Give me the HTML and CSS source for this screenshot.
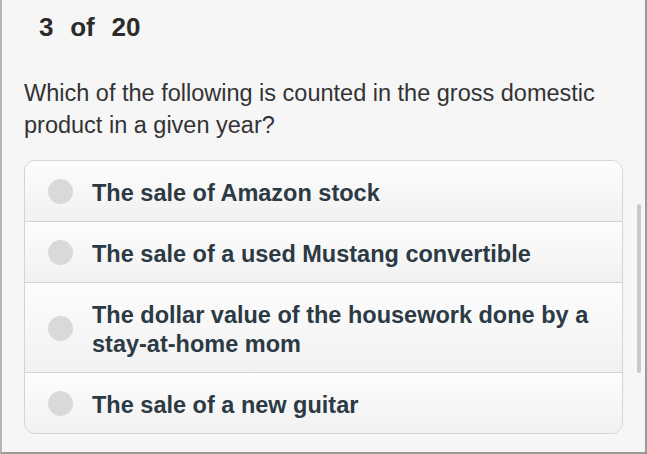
FILE: index.html
```html
<!DOCTYPE html>
<html>
<head>
<meta charset="utf-8">
<link rel="stylesheet" href="styles.css">
</head>
<body>
<div class="frame">
  <div class="counter">3 of 20</div>
  <p class="question">Which of the following is counted in the gross domestic product in a given year?</p>
  <ul class="options">
    <li class="option"><span class="radio"></span><span class="label">The sale of Amazon stock</span></li>
    <li class="option"><span class="radio"></span><span class="label">The sale of a used Mustang convertible</span></li>
    <li class="option"><span class="radio"></span><span class="label">The dollar value of the housework done by a stay-at-home mom</span></li>
    <li class="option"><span class="radio"></span><span class="label">The sale of a new guitar</span></li>
  </ul>
  <div class="scrollbar"></div>
</div>
</body>
</html>
```
FILE: styles.css
```css
html, body { margin: 0; padding: 0; }
body { width: 647px; height: 454px; overflow: hidden; font-family: "Liberation Sans", Arial, sans-serif; }
.frame {
  position: relative;
  box-sizing: border-box;
  width: 647px;
  height: 454px;
  background: #f6f6f6;
  border-left: 2px solid #b4b4b4;
  border-right: 2px solid #9a9a9a;
  border-bottom: 2px solid #9a9a9a;
  padding: 0 22px 0 22px;
}
.counter {
  font-weight: bold;
  font-size: 26px;
  word-spacing: 9.5px;
  color: #2b2b2b;
  padding: 13px 0 0 15px;
  line-height: 28px;
}
.question {
  margin: 36px 0 0 0;
  font-size: 23.5px;
  line-height: 32px;
  color: #333333;
}
.options {
  list-style: none;
  margin: 19px 0 0 0;
  padding: 0;
  border: 1px solid #d4d4d4;
  border-radius: 11px;
  overflow: hidden;
  background: #fff;
}
.option {
  display: flex;
  align-items: center;
  padding: 18px 20px 13px 23px;
  border-top: 1px solid #d4d4d4;
  background: linear-gradient(#fdfdfd, #f1f1f1);
}
.option:first-child { border-top: none; }
.radio {
  flex: none;
  width: 25px;
  height: 25px;
  border-radius: 50%;
  background: #d9d9d9;
  margin-right: 19px;
  margin-bottom: 4px;
}
.label {
  font-weight: bold;
  font-size: 23.5px;
  line-height: 29px;
  color: #2b3a44;
}
.scrollbar {
  position: absolute;
  right: 4px;
  top: 204px;
  width: 4px;
  height: 169px;
  border-radius: 2px;
  background: #c9c9c9;
}
```
